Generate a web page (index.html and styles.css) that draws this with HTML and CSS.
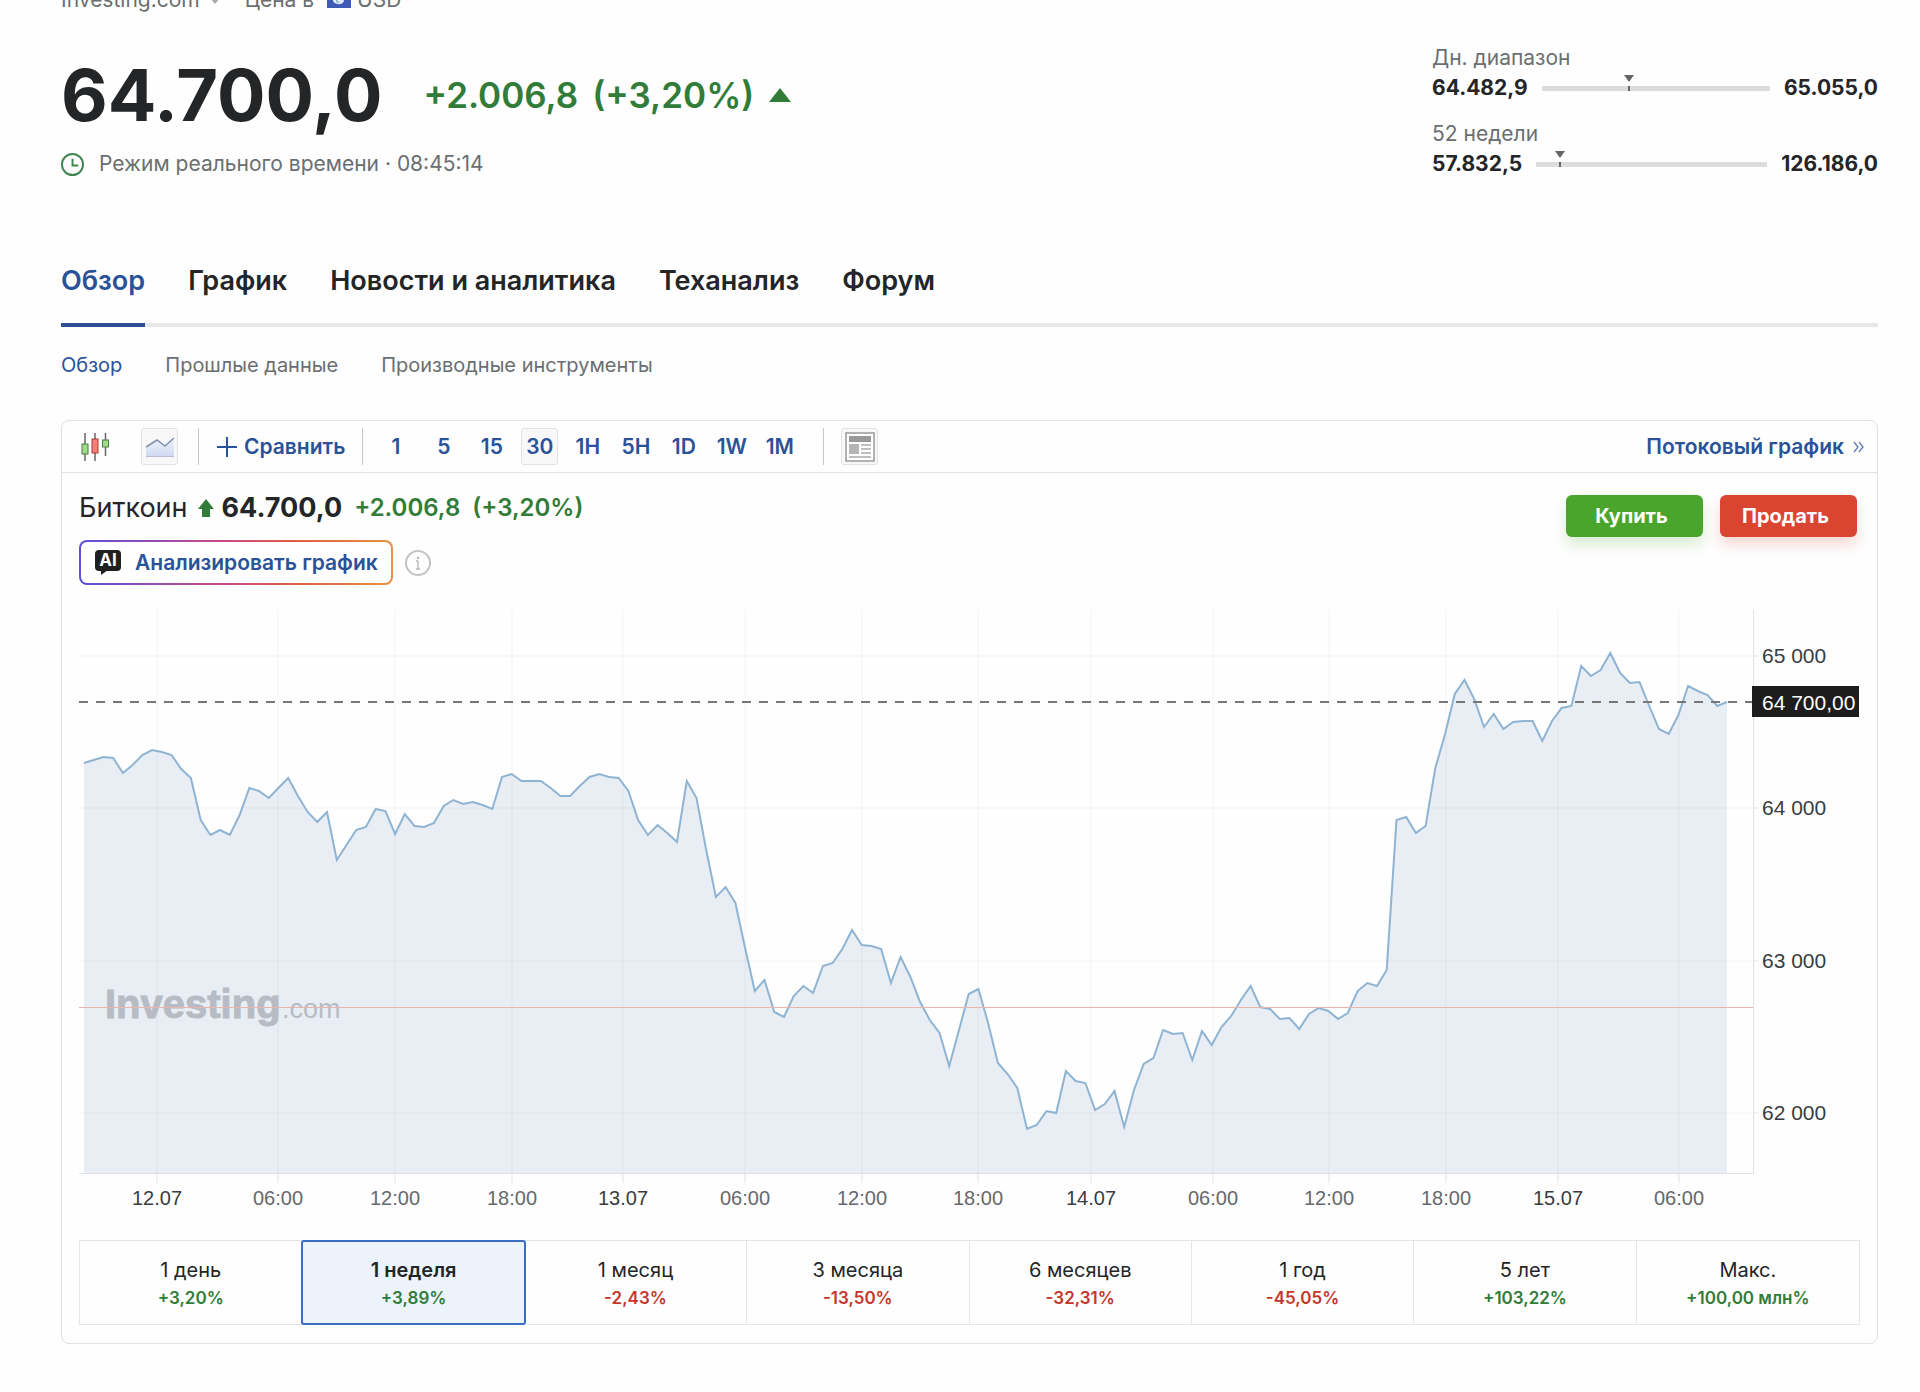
FILE: index.html
```html
<!DOCTYPE html>
<html lang="ru">
<head>
    <meta charset="UTF-8">
    <meta name="viewport" content="width=device-width, initial-scale=1.0">
    <title>Биткоин - Обзор</title>
    <link rel="stylesheet" href="styles.css">
</head>
<body>
    <main class="container">
        <!-- Source and currency -->
        <div class="source-bar">
            <span>Investing.com</span>
            <svg class="caret" viewBox="0 0 12 7"><path d="M0 0h12L6 7z"/></svg>
            <span class="price-in">Цена в</span>
            <svg class="flag" viewBox="0 0 24 16">
                <rect width="24" height="16" fill="#3f5bb5"/>
                <path d="M6 8c0 5 11 6 11 0l-3-4H8z" fill="#dfeaf5"/>
                <path d="M10 3c-1 5 0 7 3 8-4 0-5-3-3-8z" fill="#3b7fae"/>
            </svg>
            <span>USD</span>
        </div>

        <header class="instrument">
            <div class="quote">
                <div class="quote-row">
                    <span class="price">64.700,0</span>
                    <span class="change">+2.006,8</span>
                    <span class="change change-pct">(+3,20%)</span>
                    <svg class="triangle" viewBox="0 0 22 14"><path d="M11 0l11 14H0z"/></svg>
                </div>
                <div class="quote-time">
                    <svg class="clock" viewBox="0 0 24 24">
                        <circle cx="12" cy="12" r="11"/>
                        <path d="M12 6v7h6"/>
                    </svg>
                    <span>Режим реального времени · 08:45:14</span>
                </div>
            </div>

            <div class="ranges">
                <div class="range">
                    <div class="range-label">Дн. диапазон</div>
                    <div class="range-row">
                        <span>64.482,9</span>
                        <div class="range-bar"><i class="marker" style="left: 38%"></i></div>
                        <span>65.055,0</span>
                    </div>
                </div>
                <div class="range">
                    <div class="range-label">52 недели</div>
                    <div class="range-row">
                        <span>57.832,5</span>
                        <div class="range-bar"><i class="marker" style="left: 10%"></i></div>
                        <span>126.186,0</span>
                    </div>
                </div>
            </div>
        </header>

        <nav class="tabs">
            <a href="#" class="active">Обзор</a>
            <a href="#">График</a>
            <a href="#">Новости и аналитика</a>
            <a href="#">Теханализ</a>
            <a href="#">Форум</a>
        </nav>
        <nav class="subtabs">
            <a href="#" class="active">Обзор</a>
            <a href="#">Прошлые данные</a>
            <a href="#">Производные инструменты</a>
        </nav>

        <section class="chart-card">
            <!-- Toolbar -->
            <div class="toolbar">
                <button class="tool-btn" aria-label="Свечи">
                    <svg width="30" height="30" viewBox="0 0 30 30">
                        <path d="M5 1v28M15 1v28M25.500 1v23" stroke="#666" stroke-width="1.500"/>
                        <rect x="2" y="12" width="6" height="10" fill="#9fdc85" stroke="#4b7a45"/>
                        <rect x="12" y="7" width="6" height="14" fill="#f58078" stroke="#a33b36"/>
                        <rect x="22.500" y="8" width="6" height="7" fill="#9fdc85" stroke="#4b7a45"/>
                    </svg>
                </button>
                <button class="tool-btn selected area-btn" aria-label="Область">
                    <svg width="30" height="22" viewBox="0 0 30 22">
                        <defs>
                            <linearGradient id="area-icon" x1="0" y1="0" x2="0" y2="1">
                                <stop offset="0" stop-color="#f0f3fb"/>
                                <stop offset="1" stop-color="#cfdaf2"/>
                            </linearGradient>
                        </defs>
                        <path d="M1 11L12 4l8 6 9-8v18H1z" fill="url(#area-icon)"/>
                        <path d="M1 11L12 4l8 6 9-8" fill="none" stroke="#7f8fae" stroke-width="1.500"/>
                        <path d="M1 20.500h28" stroke="#b7bfd0"/>
                    </svg>
                </button>
                <span class="divider"></span>
                <button class="compare">
                    <svg width="20" height="20" viewBox="0 0 20 20"><path d="M10 0v20M0 10h20" stroke="#2a5298" stroke-width="2"/></svg>
                    Сравнить
                </button>
                <span class="divider"></span>
                <div class="timeframes">
                    <button class="tool-btn">1</button>
                    <button class="tool-btn">5</button>
                    <button class="tool-btn">15</button>
                    <button class="tool-btn selected">30</button>
                    <button class="tool-btn">1H</button>
                    <button class="tool-btn">5H</button>
                    <button class="tool-btn">1D</button>
                    <button class="tool-btn">1W</button>
                    <button class="tool-btn">1M</button>
                </div>
                <span class="divider"></span>
                <button class="tool-btn selected" aria-label="Новости">
                    <svg width="30" height="30" viewBox="0 0 30 30">
                        <rect x="1" y="1" width="28" height="28" fill="#fff" stroke="#999" stroke-width="1.500"/>
                        <path d="M4 4h22v6H4z" fill="#999"/>
                        <path d="M4 12h10v10H4z" fill="#b5b5b5"/>
                        <path d="M16 13h10M16 17h10M16 21h10M4 25h22" stroke="#aaa" stroke-width="1.500"/>
                    </svg>
                </button>
                <a href="#" class="stream-link">Потоковый график
                    <svg width="12" height="12" viewBox="0 0 12 12"><path d="M1 1l4 5-4 5M6 1l4 5-4 5" fill="none" stroke="#5e7fb3" stroke-width="1.300"/></svg>
                </a>
            </div>

            <div class="chart-body">
                <div class="chart-head">
                    <div>
                        <div class="chart-title">
                            <span class="name">Биткоин</span>
                            <svg class="arrow-up" viewBox="0 0 16 18"><path d="M8 0l8 10h-4v8H4v-8H0z"/></svg>
                            <span class="last">64.700,0</span>
                            <span class="diff">+2.006,8</span>
                            <span class="diff">(+3,20%)</span>
                        </div>
                        <div class="ai-row">
                            <button class="ai-btn">
                                <span class="ai-badge">AI</span>
                                Анализировать график
                            </button>
                            <button class="info-btn" aria-label="Информация">
                                <svg width="26" height="26" viewBox="0 0 26 26">
                                    <circle cx="13" cy="13" r="12" fill="none" stroke="#c4c4c4" stroke-width="2"/>
                                    <path d="M13 11v8M11 11h2M11 19h4" stroke="#bbb" stroke-width="1.400"/>
                                    <circle cx="13" cy="8" r="1.200" fill="#bbb"/>
                                </svg>
                            </button>
                        </div>
                    </div>
                    <div class="trade">
                        <button class="trade-btn buy">Купить</button>
                        <button class="trade-btn sell">Продать</button>
                    </div>
                </div>

                <svg class="chart" viewBox="0 0 1781 620">
                    <polygon id="area" class="area"/>
                    <g id="grid" class="grid"></g>
                    <g class="watermark">
                        <text x="26" y="408" class="wm-name">Investing</text>
                        <text x="203" y="408" class="wm-domain">.com</text>
                    </g>
                    <polyline id="line" class="line"/>
                    <path class="prev-close" d="M0 397.500H1674"/>
                    <path class="current" d="M0 92H1674"/>
                    <path class="axis" d="M0 563.500H1674.500V0"/>
                    <g id="ticks" class="ticks"></g>
                    <rect x="1673" y="76" width="107" height="31" fill="#1d1d1d"/>
                    <text x="1683" y="100" class="price-tag">64 700,00</text>
                </svg>

                <div class="periods">
                    <button><span>1 день</span><b class="up">+3,20%</b></button>
                    <button class="selected"><span>1 неделя</span><b class="up">+3,89%</b></button>
                    <button><span>1 месяц</span><b class="down">-2,43%</b></button>
                    <button><span>3 месяца</span><b class="down">-13,50%</b></button>
                    <button><span>6 месяцев</span><b class="down">-32,31%</b></button>
                    <button><span>1 год</span><b class="down">-45,05%</b></button>
                    <button><span>5 лет</span><b class="up">+103,22%</b></button>
                    <button><span>Макс.</span><b class="up">+100,00 млн%</b></button>
                </div>
            </div>
        </section>
    </main>
    <script src="script.js"></script>
</body>
</html>
```
FILE: styles.css
```css
* {
    margin: 0;
    padding: 0;
    box-sizing: border-box;
}

:root {
    --text: #232526;
    --muted: #6b6e70;
    --blue: #2a5298;
    --green: #317c39;
    --red: #c5362b;
    --border: #dfe1e3;
}

body {
    background: #fefefe;
    color: var(--text);
    font-family: Inter, "Liberation Sans", sans-serif;
    font-size: 20px;
    line-height: 24px;
    overflow-x: hidden;
}

a {
    color: inherit;
    text-decoration: none;
}

button {
    background: none;
    border: none;
    color: inherit;
    font: inherit;
    cursor: pointer;
}

.container {
    padding: 0 42px 48px 61px;
    margin-top: -12px;
}

.source-bar {
    display: flex;
    align-items: center;
    color: var(--muted);
    height: 24px;
    font-size: 21px;
}

.caret {
    width: 12px;
    height: 7px;
    margin: 0 24px 0 9px;
    fill: #aaa;
}

.flag {
    width: 24px;
    height: 16px;
    margin: 0 6px 0 13px;
}

/* Quote */
.instrument {
    display: flex;
    justify-content: space-between;
    padding-top: 34px;
}

.quote-row {
    display: flex;
    align-items: center;
    height: 98px;
}

.price {
    font-size: 72px;
    font-weight: 700;
    line-height: 98px;
    margin-right: 41px;
}

.change {
    font-size: 35px;
    font-weight: 600;
    color: var(--green);
}

.change-pct {
    margin: 0 15px 0 14px;
}

.triangle {
    width: 22px;
    height: 14px;
    fill: var(--green);
}

.quote-time {
    display: flex;
    align-items: center;
    gap: 15px;
    margin-top: 8px;
    font-size: 21px;
    color: var(--muted);
}

.clock {
    width: 23px;
    height: 23px;
    fill: none;
    stroke: #3f8450;
    stroke-width: 2;
}

.ranges {
    width: 446px;
    font-size: 21px;
}

.range {
    height: 76px;
}

.range-label {
    color: var(--muted);
    margin-bottom: 6px;
}

.range-row {
    display: flex;
    align-items: center;
    gap: 14px;
    font-weight: 700;
}

.range-bar {
    flex: 1;
    height: 5px;
    background: #dcdcdc;
    position: relative;
}

.marker {
    position: absolute;
    top: 0;
    width: 2px;
    height: 5px;
    background: #666;
}

.marker::before {
    content: "";
    position: absolute;
    left: -4px;
    top: -11px;
    border: 5px solid transparent;
    border-top: 7px solid #666;
    border-bottom: 0;
}

/* Navigation */
.tabs {
    display: flex;
    gap: 43px;
    margin-top: 43px;
    border-bottom: 4px solid #e7e8e9;
    font-size: 27px;
    font-weight: 600;
    line-height: 36px;
}

.tabs a {
    padding: 22px 0 24px;
    margin-bottom: -4px;
    border-bottom: 4px solid transparent;
}

.tabs .active {
    color: var(--blue);
    border-color: #2d4f94;
}

.subtabs {
    display: flex;
    gap: 43px;
    padding: 26px 0 43px;
    color: var(--muted);
}

.subtabs .active {
    color: var(--blue);
}

/* Chart card */
.chart-card {
    border: 1px solid var(--border);
    border-radius: 8px;
}

.toolbar {
    display: flex;
    align-items: center;
    height: 52px;
    padding: 0 12px 0 14px;
    border-bottom: 1px solid var(--border);
    color: var(--blue);
    font-size: 21px;
    font-weight: 600;
}

.tool-btn {
    display: flex;
    align-items: center;
    justify-content: center;
    width: 37px;
    height: 37px;
    border: 1px solid transparent;
    border-radius: 3px;
}

.tool-btn.selected {
    background: #f8f8f9;
    border-color: #e2e3e5;
}

.area-btn {
    margin: 0 20px 0 28px;
}

.divider {
    width: 1px;
    height: 37px;
    background: #c5c8ca;
}

.compare {
    display: flex;
    align-items: center;
    gap: 7px;
    padding: 0 17px 0 18px;
}

.timeframes {
    display: flex;
    gap: 11px;
    margin: 0 25px 0 14px;
}

.timeframes + .divider {
    margin-right: 17px;
}

.stream-link {
    display: flex;
    align-items: center;
    gap: 9px;
    margin-left: auto;
}

.chart-body {
    padding: 18px 17px;
}

.chart-head {
    display: flex;
    justify-content: space-between;
}

.chart-title {
    display: flex;
    align-items: center;
    height: 34px;
    margin-bottom: 15px;
    font-size: 27px;
}

.arrow-up {
    width: 16px;
    height: 18px;
    margin: 0 8px 0 10px;
    fill: var(--green);
}

.last {
    font-weight: 700;
    margin-right: 12px;
}

.diff {
    font-size: 24px;
    font-weight: 600;
    color: var(--green);
    margin-right: 12px;
}

.ai-row {
    display: flex;
    align-items: center;
    gap: 12px;
}

.ai-btn {
    display: flex;
    align-items: center;
    gap: 14px;
    height: 45px;
    padding: 0 13px 0 14px;
    border: 2px solid transparent;
    border-radius: 8px;
    background: linear-gradient(#fff, #fff) padding-box,
        linear-gradient(90deg, #5b50dc, #c9498c 45%, #e0603f 70%, #e69245) border-box;
    color: var(--blue);
    font-size: 21px;
    font-weight: 600;
}

.ai-badge {
    position: relative;
    width: 26px;
    height: 21px;
    margin-bottom: 4px;
    border-radius: 4px;
    background: #1f2021;
    color: #fff;
    font-size: 17px;
    font-weight: 700;
    line-height: 21px;
    text-align: center;
}

.ai-badge::after {
    content: "";
    position: absolute;
    left: 6px;
    top: 20px;
    border-top: 5px solid #1f2021;
    border-right: 7px solid transparent;
}

.info-btn {
    height: 26px;
}

.trade {
    display: flex;
    gap: 17px;
    padding: 4px 3px 0 0;
}

.trade-btn {
    width: 137px;
    height: 42px;
    padding-right: 6px;
    border-radius: 6px;
    color: #fff;
    font-weight: 700;
}

.buy {
    background: #4aa52c;
    box-shadow: 0 8px 14px rgba(74, 165, 44, 0.2);
}

.sell {
    background: #d94531;
    box-shadow: 0 8px 14px rgba(217, 69, 49, 0.2);
}

.chart {
    display: block;
    width: 100%;
    margin-top: 25px;
    font-family: "Liberation Sans", Arial, sans-serif;
    font-size: 21px;
}

.grid path {
    stroke: #000;
    stroke-opacity: 0.02;
    stroke-width: 2;
}

.area {
    fill: #dbe5ed;
    fill-opacity: 0.65;
}

.line {
    fill: none;
    stroke: #8fb4d3;
    stroke-width: 2;
}

.prev-close {
    stroke: #eab5ae;
}

.current {
    stroke: #777;
    stroke-width: 2;
    stroke-dasharray: 9 8;
}

.axis {
    fill: none;
    stroke: #dfe2e4;
}

.ticks path {
    stroke: #dfe3e5;
}

.ticks text {
    fill: #66686b;
}

.ticks .day,
.ticks .value {
    fill: #3a3c3e;
}

.ticks .time {
    font-size: 20px;
    text-anchor: middle;
}

.chart .price-tag {
    fill: #fff;
}

.watermark {
    fill: #b7bcc4;
}

.wm-name {
    font-size: 40px;
    font-weight: 700;
    stroke: #b7bcc4;
}

.wm-domain {
    font-size: 27px;
}

/* Periods */
.periods {
    display: grid;
    grid-template-columns: repeat(8, 1fr);
    margin-top: 10px;
    border: 1px solid #e3e5e6;
}

.periods button {
    display: flex;
    flex-direction: column;
    align-items: center;
    gap: 4px;
    height: 83px;
    padding-top: 17px;
    border-right: 1px solid #e3e5e6;
}

.periods button:last-child {
    border-right: none;
}

.periods b {
    font-size: 17px;
    font-weight: 600;
}

.periods .selected {
    margin: -1px;
    height: 85px;
    padding-top: 16px;
    border: 2px solid #3a6cc3;
    border-radius: 3px;
    background: #edf3fb;
    font-weight: 600;
}

.up {
    color: var(--green);
}

.down {
    color: var(--red);
}
```
FILE: script.js
```js
// One point per 30 minutes, as heights inside the chart's viewBox
const points = [
    153, 150, 147, 148, 163, 155, 145, 140, 142, 145, 159, 168, 210, 225, 220, 225, 205, 178, 181, 188,
    178, 168, 186, 202, 212, 202, 250, 235, 220, 217, 199, 201, 224, 204, 216, 217, 213, 196, 190, 194,
    192, 195, 199, 167, 164, 171, 171, 171, 178, 186, 186, 176, 167, 164, 167, 168, 181, 210, 225, 215,
    223, 232, 171, 188, 240, 287, 277, 293, 338, 381, 370, 402, 407, 386, 376, 383, 356, 353, 339, 320,
    335, 336, 339, 373, 347, 367, 392, 410, 423, 456, 420, 384, 379, 413, 453, 464, 478, 519, 515, 501,
    503, 461, 471, 473, 500, 494, 481, 517, 480, 454, 448, 420, 424, 423, 450, 421, 435, 417, 406, 390,
    376, 397, 399, 409, 408, 419, 404, 398, 401, 409, 403, 381, 373, 376, 360, 210, 207, 223, 216, 158,
    124, 84, 70, 89, 117, 104, 119, 112, 111, 111, 131, 111, 98, 96, 56, 66, 60, 43, 63, 73,
    72, 96, 119, 124, 105, 76, 81, 85, 96, 92
];

const times = [
    [78, "12.07"], [199, "06:00"], [316, "12:00"], [433, "18:00"],
    [544, "13.07"], [666, "06:00"], [783, "12:00"], [899, "18:00"],
    [1012, "14.07"], [1134, "06:00"], [1250, "12:00"], [1367, "18:00"],
    [1479, "15.07"], [1600, "06:00"]
];

const prices = [[46, "65 000"], [198, "64 000"], [351, "63 000"], [503, "62 000"]];

const left = 5;
const bottom = 564;
const right = 1674;
const width = 1643;

const coords = points.map((y, i) => `${(left + i * width / (points.length - 1)).toFixed(1)},${y}`).join(" ");
document.getElementById("line").setAttribute("points", coords);
document.getElementById("area").setAttribute("points", `${left},${bottom} ${coords} ${left + width},${bottom}`);

document.getElementById("grid").innerHTML =
    times.map(([x]) => `<path d="M${x} 0V${bottom}"/>`).join("") +
    prices.map(([y]) => `<path d="M0 ${y}H${right}"/>`).join("");

document.getElementById("ticks").innerHTML =
    times.map(([x, label]) => `
        <path d="M${x} ${bottom}v9"/>
        <text class="time ${label.includes(".") ? "day" : ""}" x="${x}" y="595">${label}</text>
    `).join("") +
    prices.map(([y, label]) => `
        <path d="M${right} ${y}h5"/>
        <text class="value" x="${right + 9}" y="${y + 7}">${label}</text>
    `).join("");
```
